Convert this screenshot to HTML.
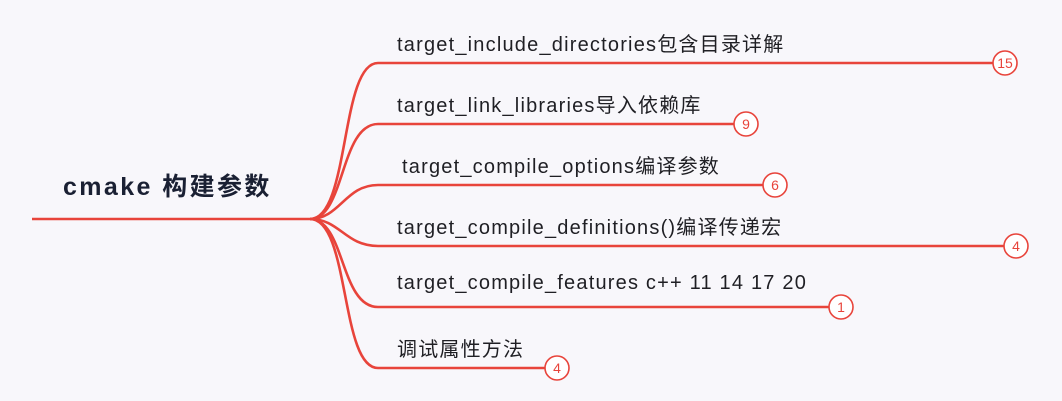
<!DOCTYPE html>
<html><head><meta charset="utf-8"><style>
body{margin:0;width:1062px;height:401px;background:#f8f7fb;overflow:hidden;position:relative;font-family:"Liberation Sans","Noto Sans CJK SC",sans-serif}
.t{position:absolute;left:397px;font-size:20px;letter-spacing:1.2px;color:#1f1f24;white-space:nowrap}
.h{position:absolute;left:63px;top:167px;font-size:25px;letter-spacing:2.4px;font-weight:bold;color:#1a2033;white-space:nowrap}
</style></head><body>
<svg width="1062" height="401" style="position:absolute;left:0;top:0">
<g fill="none" stroke="#e8443b" stroke-width="2.6">
<path d="M32 219 H310"/>
<path d="M310 219 C350 219 340 63 378 63 H993"/>
<path d="M310 219 C345 219 340 124 378 124 H734"/>
<path d="M310 219 C340 219 345 185 378 185 H763"/>
<path d="M310 219 C340 219 345 246 378 246 H1004"/>
<path d="M310 219 C345 219 340 307 378 307 H829"/>
<path d="M310 219 C350 219 340 368 378 368 H545"/>
</g>
<g fill="#fff" stroke="#e8443b" stroke-width="1.6">
<circle cx="1005" cy="63" r="12"/><circle cx="746" cy="124" r="12"/><circle cx="775" cy="185" r="12"/>
<circle cx="1016" cy="246" r="12"/><circle cx="841" cy="307" r="12"/><circle cx="557" cy="368" r="12"/>
</g>
<g fill="#e8443b" font-family="Liberation Sans,sans-serif" font-size="14" text-anchor="middle">
<text x="1005" y="68">15</text><text x="746" y="129">9</text><text x="775" y="190">6</text>
<text x="1016" y="251">4</text><text x="841" y="312">1</text><text x="557" y="373">4</text>
</g>
</svg>
<div class="h">cmake 构建参数</div>
<div class="t" style="top:28px">target_include_directories包含目录详解</div>
<div class="t" style="top:89px">target_link_libraries导入依赖库</div>
<div class="t" style="top:150px;left:402px">target_compile_options编译参数</div>
<div class="t" style="top:211px">target_compile_definitions()编译传递宏</div>
<div class="t" style="top:272px">target_compile_features c++ 11 14 17 20</div>
<div class="t" style="top:333px">调试属性方法</div>
</body></html>
